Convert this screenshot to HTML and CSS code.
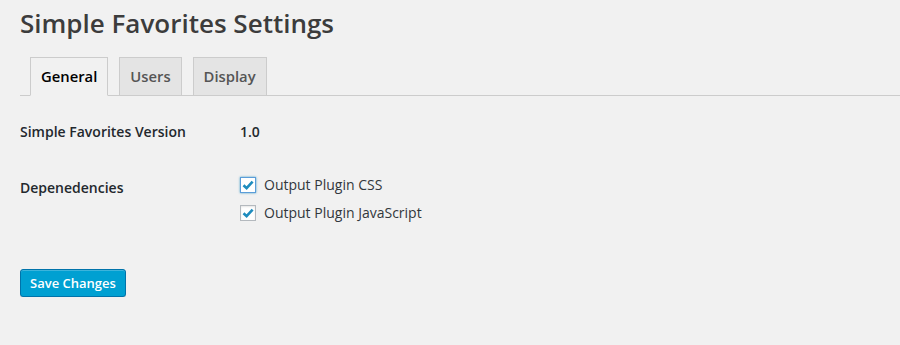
FILE: index.html
```html
<!DOCTYPE html>
<html>
    <head>
        <meta charset="UTF-8">
        <title>Simple Favorites Settings</title>
        <link rel="stylesheet" href="styles.css">
    </head>
    <body>
        <div class="wrap">
            <h1 class="page-title">Simple Favorites Settings</h1>

            <nav class="tabs">
                <a class="tab tab-active">General</a>
                <a class="tab">Users</a>
                <a class="tab">Display</a>
            </nav>

            <div class="row row-version">
                <div class="row-label">Simple Favorites Version</div>
                <div class="row-value version">1.0</div>
            </div>

            <div class="row row-deps">
                <div class="row-label deps-label">Depenedencies</div>
                <div class="row-value">
                    <label class="check">
                        <span class="box box-focus">
                            <svg width="14" height="14" viewBox="0 0 14 14"><polyline points="2.5,7.2 5.6,10.2 11.6,3.6" fill="none" stroke="#1e8cbe" stroke-width="2.6"/></svg>
                        </span>
                        Output Plugin CSS
                    </label>
                    <label class="check">
                        <span class="box">
                            <svg width="14" height="14" viewBox="0 0 14 14"><polyline points="2.5,7.2 5.6,10.2 11.6,3.6" fill="none" stroke="#1e8cbe" stroke-width="2.6"/></svg>
                        </span>
                        Output Plugin JavaScript
                    </label>
                </div>
            </div>

            <button class="button-primary">Save Changes</button>
        </div>
    </body>
</html>
```

FILE: styles.css
```css
* {
    box-sizing: border-box;
}

body {
    margin: 0;
    background: #f1f1f1;
    color: #23282d;
    font-family: "Open Sans", Arial, sans-serif;
    font-size: 14px;
    line-height: 20px;
}

.wrap {
    padding: 0 0 0 20px;
}

.page-title {
    margin: 7px 0 0;
    font-size: 26px;
    line-height: 32px;
    font-weight: 600;
    color: #3c3c3c;
}

.tabs {
    display: flex;
    margin-top: 18px;
    padding-left: 10px;
    border-bottom: 1px solid #ccc;
}

.tab {
    display: block;
    margin-right: 11px;
    margin-bottom: -1px;
    padding: 6px 10px 7px;
    border: 1px solid #ccc;
    background: #e4e4e4;
    color: #555;
    font-size: 14.8px;
    line-height: 24px;
    font-weight: 600;
}

.tab-active {
    background: #f1f1f1;
    border-bottom-color: #f1f1f1;
    color: #000;
}

.row {
    display: flex;
}

.row-label {
    width: 220px;
    font-weight: 600;
}

.row-version {
    margin-top: 26px;
}

.version {
    font-weight: 600;
}

.row-deps {
    margin-top: 33px;
}

.deps-label {
    padding-top: 3px;
}

.check {
    display: flex;
    align-items: center;
    margin-bottom: 8px;
    color: #32373c;
}

.box {
    display: flex;
    align-items: center;
    justify-content: center;
    width: 16px;
    height: 16px;
    margin-right: 8px;
    background: #fff;
    border: 1px solid #b4b9be;
    box-shadow: inset 0 1px 2px rgba(0, 0, 0, 0.1);
}

.box-focus {
    border-color: #5b9dd9;
    box-shadow: 0 0 2px rgba(30, 140, 190, 0.8);
}

.button-primary {
    display: block;
    margin-top: 38px;
    height: 28px;
    padding: 0 9px;
    background: #00a0d2;
    border: 1px solid #0073aa;
    border-radius: 3px;
    box-shadow: inset 0 1px 0 rgba(120, 200, 230, 0.5), 0 1px 0 rgba(0, 0, 0, 0.15);
    color: #fff;
    font-family: "Open Sans", Arial, sans-serif;
    font-size: 13px;
    font-weight: 600;
    line-height: 26px;
}
```
